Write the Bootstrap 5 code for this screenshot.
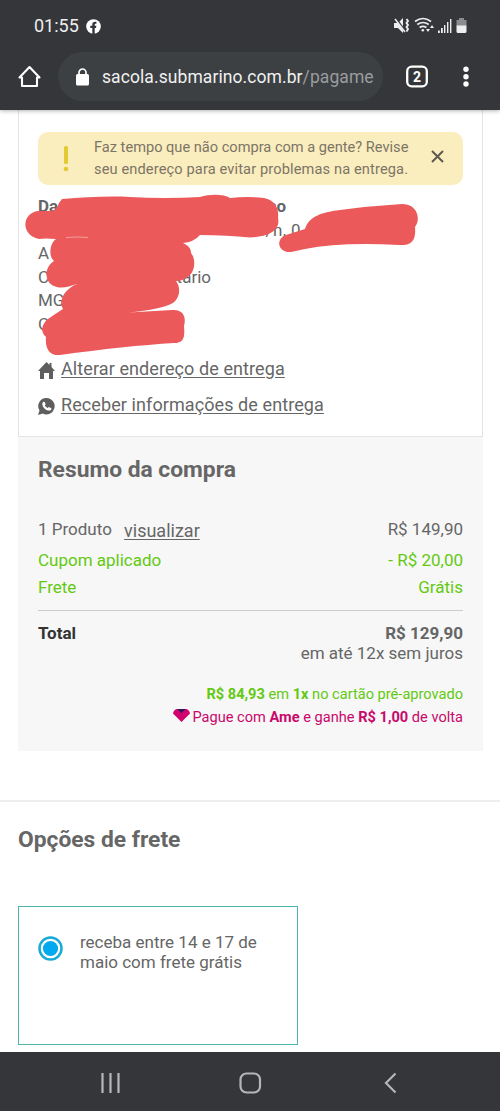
<!DOCTYPE html>
<html lang="pt-BR">
<head>
<meta charset="utf-8">
<meta name="viewport" content="width=device-width, initial-scale=1">
<title>Sacola - Submarino</title>
<link href="https://cdn.jsdelivr.net/npm/bootstrap@5.3.0/dist/css/bootstrap.min.css" rel="stylesheet">
<style>
body{font-family:Roboto,"Liberation Sans",sans-serif;font-size:17px;line-height:20px;color:#666;background:#fff;height:1111px;overflow:hidden}
svg{display:block;flex:none}
.dark-bar{background:#35363a;color:#eee}
.phone-top{height:110px;box-shadow:0 1px 4px rgba(0,0,0,.3)}
.status-row{height:52px;padding:0 32px 0 34px;font-size:18px}
.url-row{height:49px;padding:0 30px 0 18px}
.url-pill{width:325px;height:49px;border-radius:25px;background:#3c4043;margin-left:17px;padding-left:18px;font-size:17.5px;letter-spacing:.08px;color:#f1f1f1}
.url-pill .host{margin-left:13px}
.url-pill .path{color:#9a9c9f}
.main-area{height:942px}
.ship-box{margin:0 17px 0 18px;height:327px;border:1px solid #e4e4e4;border-top:0;padding:22px 19px 0}
.notice{height:53px;background:#faedbe;border-radius:10px;padding:0 19px 0 25px;font-size:14.6px;line-height:21.6px;color:#7c7566}
.notice-text{padding-left:25px}
.notice-text .second{letter-spacing:.13px}
.address{height:172px;padding-top:10px;line-height:23.6px}
.address div{height:23.6px}
.scribble{left:-19px;top:0;pointer-events:none}
.act{height:36px;gap:6px;font-size:18px;letter-spacing:.09px}
.act a{margin-top:2px}
.act svg{margin-top:5px}
.act a,.see{color:#666;text-underline-offset:2px}
.summary{margin:0 17px 0 18px;height:314px;background:#f7f7f7;padding:0 20px}
h2{font-size:22.8px;line-height:28px;font-weight:700;color:#666}
.green{color:#63c912}
.pink{color:#c9086c}
.fine{font-size:14.6px;line-height:23px}
.rule{border-top:1px solid #ccc}
.freight{border-top:2px solid #eee;margin-top:49px;padding:24px 18px 0}
.option{width:280px;height:139px;border:1px solid #4db6ac;margin-top:52px;padding:25px 19px;gap:17px}
.nav-keys{height:59px}
</style>
</head>
<body>
<header class="dark-bar phone-top position-relative">
  <div class="status-row d-flex align-items-center justify-content-between">
    <div class="d-flex align-items-center" style="gap:7px"><span>01:55</span>
      <svg width="15" height="15" viewBox="0 0 15 15"><circle cx="7.5" cy="7.5" r="7.3" fill="#fff"/><path d="M6.300 15V9H4.300V6.800h2V5.500C6.300 3.300 7.600 2.400 10.400 2.800v2C9 4.700 8.700 5 8.700 6v.8h1.700L10 9H8.700v6z" fill="#35363a"/></svg>
    </div>
    <svg width="74" height="18" viewBox="0 0 74 18" fill="#eee"><path d="M0 6h4l5-5v15l-5-5H0z"/><path d="M1 0l10 14" stroke="#35363a" stroke-width="2"/><path d="M1 2l10 13" stroke="#eee" stroke-width="1.500"/><path d="M12.500 2l1.500 2-1.500 2 1.500 2-1.500 2 1.500 2-1.500 2.500" fill="none" stroke="#eee" stroke-width="1.900"/><g fill="none" stroke="#eee" stroke-width="1.700"><path d="M21 4.500q8-6 16 0M23.300 7.500q5.700-4 11.400 0M25.600 10.500q3.400-2.400 6.800 0"/></g><circle cx="28.800" cy="13.200" r="1.300"/><path d="M32 12h4l-2 3zM36 11h4l-2-3z"/><rect x="44" y="13.500" width="1.800" height="2.500"/><rect x="47" y="11" width="1.800" height="5"/><rect x="50" y="8" width="1.400" height="8"/><rect x="53" y="5" width="1.400" height="11"/><rect x="56" y="2" width="1.400" height="14"/><path d="M65 1h5v2h2.500V9h-10V3H65z" fill="#8b8c8e"/><path d="M62.500 8.500h10v6q0 1.500-1.500 1.500h-7q-1.500 0-1.500-1.500z"/></svg>
  </div>
  <div class="url-row d-flex align-items-center">
    <svg width="23" height="24" viewBox="0 0 23 24" fill="none" stroke="#fff" stroke-width="2.100" stroke-linejoin="round" stroke-linecap="round"><path d="M4 12.500H1.500L11.500 2l10 10.500H19M4 12.500V21h15v-8.500"/></svg>
    <div class="url-pill d-flex align-items-center"><svg width="13" height="18" viewBox="0 0 13 18"><rect y="6" width="13" height="11.500" rx="1.500" fill="#fff"/><path d="M3 7V4.500a3.500 3.500 0 017 0V7" fill="none" stroke="#fff" stroke-width="1.700"/></svg><span class="host">sacola.submarino.com.br<span class="path">/pagame</span></span></div>
    <svg class="ms-auto" width="70" height="24" viewBox="0 0 70 24"><rect x="7.700" y="2.200" width="19.600" height="19.600" rx="4.500" fill="none" stroke="#fff" stroke-width="2.300" transform="translate(-.5 -.500)"/><text x="17" y="16.500" text-anchor="middle" font-size="14" font-weight="700" fill="#fff">2</text><g fill="#fff"><circle cx="66" cy="4.300" r="2.700"/><circle cx="66" cy="11.700" r="2.700"/><circle cx="66" cy="19" r="2.700"/></g></svg>
  </div>
</header>

<main class="main-area overflow-hidden">
  <section class="ship-box">
    <div class="notice d-flex align-items-center">
      <svg width="6" height="26" viewBox="0 0 6 26" fill="#e2cb32"><rect x="1" width="4" height="18" rx="1.500"/><circle cx="3" cy="23" r="2.300"/></svg>
      <div class="flex-grow-1 text-nowrap notice-text">Faz tempo que não compra com a gente? Revise<br><span class="second">seu endereço para evitar problemas na entrega.</span></div>
      <svg class="mb-1" width="13" height="13" viewBox="0 0 13 13" stroke="#5d594e" stroke-width="2"><path d="M1 1l11 11M12 1L1 12"/></svg>
    </div>
    <div class="address position-relative">
      <div class="d-flex fw-bold justify-content-between" style="width:248px"><span>Da</span><span>so</span></div>
      <div class="d-flex justify-content-between" style="width:263px;padding-left:151px"><span>y</span><span style="letter-spacing:.4px">s/n, 0</span></div>
      <div class="d-flex justify-content-between" style="width:152px"><span>A</span><span>s</span></div>
      <div class="d-flex justify-content-between" style="width:173px"><span>C</span><span>tário</span></div>
      <div>MG</div>
      <div>C</div>
      <svg class="scribble position-absolute" width="425" height="180" viewBox="19 185 425 180" fill="#eb595a"><path d="M62 199C85 197 110 196 130 197Q165 199 200 197C210 194 224 194 230 198Q248 196 264 198C276 200 279 210 278 218C281 230 269 237 250 237.500Q227 235 200 235Q194 242 183 243C190 246 191 250 191 253C196 259 195 270 190 275Q184 281 176 281C182 289 179 300 171 304Q155 311 120 313L172 310C185 309 186 319 184 326C185 337 184 343 174 343Q125 346 60 355C49 356 45 348 46 337C39 331 43 323 48 319Q55 314 63 309C58 300 65 289 77 284C68 287 61 289 54 286C44 282 44 267 54 261C48 256 50 243 56 239Q44 238 39 239C20 235 22 213 38 211H52Q57 209 59 203Z"/><path d="M305 229C309 216 323 212 340 210Q370 206 402 204C418 204 421 220 415 227C416 239 413 246 399 245Q340 242 305 249L291 252C278 253 275 239 286 235Z"/><path d="M66 237.500q12-1 22 0" fill="none" stroke="#f59e9b"/></svg>
    </div>
    <div class="act d-flex"><svg width="17" height="17" viewBox="0 0 17 17" fill="#5e5e5e"><path d="M8.500 0l3 3V1h2v4l3.500 4h-2v8h-4v-6H6v6H2V9H0z"/></svg><a href="#">Alterar endereço de entrega</a></div>
    <div class="act d-flex"><svg width="17" height="17" viewBox="0 0 17 17"><path d="M8.700 0a8.200 8.200 0 11-4 15.500L0 17l1.500-4.500A8.200 8.200 0 018.700 0z" fill="#5e5e5e"/><path d="M5 4l1.500-.3 1.200 2.600-.9 1.200q1 1.800 2.900 2.600l1.200-1.100 2.500 1.200-.2 1.500q-1.300 1.300-3.300.7-4.200-1.200-5.500-5.500Q4.100 5.200 5 4z" fill="#fff"/></svg><a href="#">Receber informações de entrega</a></div>
  </section>

  <section class="summary">
    <h2 class="mb-0" style="padding-top:19px">Resumo da compra</h2>
    <div class="d-flex justify-content-between" style="margin-top:35px;height:31px"><span>1 Produto <a href="#" class="see position-relative d-inline-block" style="top:2px;margin-left:8px;font-size:18px">visualizar</a></span><span>R$ 149,90</span></div>
    <div class="green d-flex justify-content-between" style="height:27px"><span>Cupom aplicado</span><span>- R$ 20,00</span></div>
    <div class="green d-flex justify-content-between" style="height:33px"><span>Frete</span><span>Grátis</span></div>
    <div class="rule d-flex justify-content-between fw-bold" style="padding-top:12px"><span style="color:#333">Total</span><span>R$ 129,90</span></div>
    <div class="text-end">em até 12x sem juros</div>
    <div class="fine text-end" style="margin-top:20px">
      <div class="green"><b>R$ 84,93</b> em <b>1x</b> no cartão pré-aprovado</div>
      <div class="pink d-flex justify-content-end"><svg width="17" height="14" viewBox="0 0 17 14" style="margin:3px 2px 0 0"><path d="M3.500 0h10q3 1 3.500 4.500L8.500 13 0 4.500Q.5 1 3.500 0z" fill="#d0006f"/><path d="M4.500 0h8L8.500 4z" fill="#2b175c"/></svg><span>Pague com <b>Ame</b> e ganhe <b>R$ 1,00</b> de volta</span></div>
    </div>
  </section>

  <section class="freight">
    <h2 class="mb-0">Opções de frete</h2>
    <div class="option d-flex">
      <svg width="25" height="25" viewBox="0 0 25 25" style="margin-top:4px"><circle cx="12.500" cy="12.500" r="11" fill="#fff" stroke="#18abd6" stroke-width="2.500"/><circle cx="12.500" cy="12.500" r="7.600" fill="#03a9ee"/></svg>
      <div>receba entre 14 e 17 de<br>maio com frete grátis</div>
    </div>
  </section>
</main>

<footer class="dark-bar nav-keys">
  <svg width="500" height="59" viewBox="0 0 500 59" fill="none" stroke="#b5b6b8" stroke-width="2.200"><path d="M102.500 21v20M110.500 21v20M118.500 21v20"/><rect x="240.500" y="21.500" width="19.500" height="19" rx="6"/><path d="M395.500 21.500L386 31l9.500 9.500"/></svg>
</footer>
<script src="https://cdn.jsdelivr.net/npm/bootstrap@5.3.0/dist/js/bootstrap.bundle.min.js"></script>
</body>
</html>
